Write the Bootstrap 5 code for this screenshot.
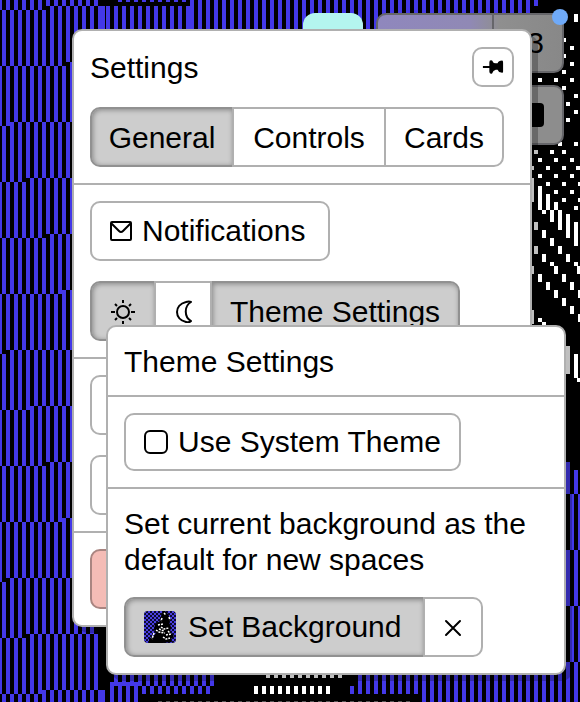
<!DOCTYPE html>
<html lang="en">
<head>
<meta charset="utf-8">
<meta name="viewport" content="width=device-width, initial-scale=1">
<title>Settings</title>
<link href="https://cdn.jsdelivr.net/npm/bootstrap@5.3.0/dist/css/bootstrap.min.css" rel="stylesheet">
<style>
  :root { --line: #b0b0b0; --line-strong: #919191; --pressed: #cdcdcd; }
  body { font-family: "Liberation Sans", Arial, sans-serif; font-size: 30px; line-height: 36px; color: #000; background: #000; }
  .backdrop-art { z-index: 0; }
  .space { min-height: 100vh; }
  .toolbar-top { padding: 13px 16px 0 0; gap: 13px; z-index: 1; }
  .user-pill { width: 60px; height: 60px; border-radius: 12px; background: #b4f5ef; }
  .glass { height: 60px; border: 2px solid #66666a; border-radius: 10px; color: #000; }
  .glass-wide { width: 188px; background: linear-gradient(90deg, #8f87bd 0, #9089b5 50%, #8f8f8f 66%, #888 100%); }
  .glass-wide > span:first-child { flex: 0 0 116px; border-right: 2px solid #66666a; }
  .glass-wide > span:last-child { padding-right: 18px; }
  .glass-small { width: 90px; background: #8d8d8d; padding-right: 18px; margin: 12px 16px 0 auto; }
  .glass-small i { width: 26px; height: 24px; border-radius: 4px; background: #000; }
  .notice-dot { width: 16px; height: 16px; background: #6faaf8; top: 9px; right: 12px; z-index: 2; }
  .panel { background: #fff; border: 2px solid var(--line); border-radius: 10px; box-shadow: 6px 6px 0 rgba(0,0,0,.25); }
  .panel > section { padding: 16px; }
  .panel > section + section { border-top: 2px solid var(--line); }
  .panel-settings { top: 29px; left: 72px; right: 48px; z-index: 3; }
  .panel-theme { top: 325px; left: 106px; right: 14px; z-index: 4; }
  .panel h1, .panel h2, .panel p { font-size: 30px; line-height: 36px; font-weight: 400; }
  .panel h1, .panel h2, .panel p { padding-top: 1px; margin-bottom: -1px; }
  .stack { gap: 20px; }
  .panel .btn {
    --bs-btn-font-size: 30px; --bs-btn-line-height: 36px; --bs-btn-color: #000; --bs-btn-bg: #fff;
    --bs-btn-padding-x: 18px; --bs-btn-padding-y: 10px; --bs-btn-border-width: 2px; --bs-btn-border-color: var(--line);
    --bs-btn-border-radius: 10px; --bs-btn-active-bg: var(--pressed); --bs-btn-active-border-color: var(--line-strong);
    --bs-btn-active-color: #000; --bs-btn-hover-bg: #eee; --bs-btn-hover-color: #000; --bs-btn-hover-border-color: var(--line);
    min-height: 60px; white-space: nowrap;
  }
  .panel .btn-text { padding-top: 11px; padding-bottom: 9px; }
  .panel .btn-group > .btn { flex: 0 0 auto; }
  .panel .btn-group > .btn:not(:first-child) { margin-left: -2px; }
  .panel .btn.active { box-shadow: inset 1px 1px 5px rgba(0,0,0,.35); z-index: 0; }
  .panel .btn-group > .btn:not(.active) { z-index: 1; }
  .panel .tab-general { width: 144px; padding-left: 0; padding-right: 0; }
  .panel .tab-controls { width: 154px; padding-left: 0; padding-right: 0; }
  .panel .btn-notify { min-width: 240px; }
  .panel .btn-set { min-width: 301px; }
  .panel .btn-pin { --bs-btn-padding-x: 8px; --bs-btn-padding-y: 7px; min-height: 40px; width: 42px; }
  .panel .btn-danger-soft { --bs-btn-bg: #f4bcb6; --bs-btn-border-color: #a98581; }
  .panel .btn-check-row { --bs-btn-padding-y: 9px; min-height: 58px; }
  .box-tick { appearance: none; width: 24px; height: 24px; margin: 0; border: 2px solid #000; border-radius: 6px; background: #fff; }
  .box-tick:checked { background: #000; }
  .gap-icon { gap: 10px; }
  .gap-thumb { gap: 12px; }
  svg { display: block; }
  .thumb { border-radius: 4px; }
  .ink { fill: none; stroke: #000; stroke-width: 2; }
</style>
</head>
<body>
<main class="space position-relative overflow-hidden">
  <svg class="backdrop-art position-absolute top-0 start-0" width="580" height="702" viewBox="0 0 580 702" aria-hidden="true">
    <rect width="580" height="702" fill="#000"/>
    <path id="weave" fill="#4338e8"/>
    <path id="sparks" fill="#fff"/>
    <path d="M158 701.500H412" stroke="#555" stroke-dasharray="4 4"/>
  </svg>

  <div class="toolbar-top d-flex justify-content-end position-relative">
    <div class="user-pill"></div>
    <div class="glass glass-wide d-flex">
      <span></span><span class="flex-fill d-flex align-items-center justify-content-end">3</span>
    </div>
  </div>
  <div class="glass glass-small d-flex align-items-center justify-content-end position-relative"><i></i></div>
  <span class="notice-dot position-absolute rounded-circle"></span>

  <div class="panel panel-settings position-absolute" role="dialog" aria-labelledby="settings-title">
    <section class="d-flex flex-column stack">
      <div class="d-flex justify-content-between align-items-center">
        <h1 class="mt-0" id="settings-title">Settings</h1>
        <button type="button" class="btn btn-pin d-flex align-items-center justify-content-center" aria-label="Pin">
          <svg width="24" height="16" viewBox="0 0 24 16"><path d="M1 7H8V3Q8 0 11 1Q12 4 15 4H17Q18 1 22 1Q23 1 23 3V13Q23 15 21 14Q18 14 17 11H15Q12 12 11 15Q8 16 8 13V9H1Z"/></svg>
        </button>
      </div>
      <div class="btn-group align-self-start" role="group" aria-label="Settings sections">
        <button type="button" class="btn btn-text tab-general active" aria-pressed="true">General</button>
        <button type="button" class="btn btn-text tab-controls">Controls</button>
        <button type="button" class="btn btn-text">Cards</button>
      </div>
    </section>
    <section class="d-flex flex-column align-items-start stack">
      <button type="button" class="btn btn-notify d-flex align-items-center gap-icon">
        <svg width="22" height="20" viewBox="0 0 22 20"><rect class="ink" x="1" y="1" width="20" height="18" rx="1"/><path class="ink" d="M1 2L9 10Q11 12 13 10L21 2"/></svg>
        Notifications
      </button>
      <div class="btn-group" role="group" aria-label="Theme">
        <button type="button" class="btn active d-flex align-items-center" aria-label="Light" aria-pressed="true">
          <svg width="26" height="26" viewBox="0 0 26 26"><circle class="ink" cx="13" cy="14" r="6"/><path class="ink" d="M13 2V5M13 23V26M1 14H5M21 14H25M5 6L7 8M19 20L21 22M5 22L7 20M19 8L21 6"/></svg>
        </button>
        <button type="button" class="btn d-flex align-items-center" aria-label="Dark">
          <svg width="18" height="24" viewBox="0 0 18 24"><path class="ink" stroke-linejoin="round" d="M17 3Q15 2 12 3C0 6 0 20 12 23Q15 24 17 22C10 18 10 7 17 3Z"/></svg>
        </button>
        <button type="button" class="btn btn-text active" aria-expanded="true">Theme Settings</button>
      </div>
    </section>
    <section class="d-flex flex-column stack">
      <button type="button" class="btn" aria-label="Option"></button>
      <button type="button" class="btn" aria-label="Option"></button>
    </section>
    <section class="d-flex flex-column">
      <button type="button" class="btn btn-danger-soft" aria-label="Remove"></button>
    </section>
  </div>

  <div class="panel panel-theme position-absolute" role="dialog" aria-labelledby="theme-title">
    <section><h2 class="mt-0" id="theme-title">Theme Settings</h2></section>
    <section class="d-flex">
      <label class="btn btn-check-row d-flex align-items-center gap-icon" for="system-theme">
        <input class="box-tick" type="checkbox" id="system-theme">
        Use System Theme
      </label>
    </section>
    <section class="d-flex flex-column align-items-start stack">
      <p class="mt-0">Set current background as the default for new spaces</p>
      <div class="btn-group" role="group" aria-label="Default background">
        <button type="button" class="btn btn-set active d-flex align-items-center gap-thumb">
          <svg class="thumb" width="32" height="32" viewBox="0 0 32 32" aria-hidden="true">
            <defs><pattern id="mesh" width="4" height="4" patternUnits="userSpaceOnUse"><path d="M0 0h2v2h-2zM2 2h2v2h-2z" fill="#4a40e0"/></pattern></defs>
            <rect width="32" height="32" fill="#0c0a30"/>
            <rect width="32" height="32" fill="url(#mesh)"/>
            <path d="M19 0L17 5L16 10L11 13L10 19L12 22L9 25L5 28L5 32H19L28 31L27 28L30 25L26 21L27 16L25 11L27 9L24 3L21 0Z"/>
            <path fill="none" stroke="#fff" stroke-width="1.500" stroke-dasharray="2 1" d="M20 2L22 4M18 7L17 10M25 6L26 9M14 14L19 13M12 19L15 21L21 22M17 16L20 18L25 17M22 24L27 23M19 26L22 28L26 27M10 22L8 28M15 18L20 20M24 20L26 22"/>
          </svg>
          Set Background
        </button>
        <button type="button" class="btn d-flex align-items-center" aria-label="Clear background">
          <svg width="20" height="20" viewBox="0 0 20 20"><path class="ink" stroke-linecap="round" d="M3 4L17 18M17 4L3 18"/></svg>
        </button>
      </div>
    </section>
  </div>
</main>

<script>
  // Stripes are 4px wide on an 8px pitch; each row is offset by half a pitch.
  const box = (x, y, w, h) => `M${x} ${y}h${w}v${h}h${-w}z`;
  const run = (x0, x1, y0, y1) => { let d = ''; for (let x = x0; x < x1; x += 8) d += box(x, y0, 4, y1 - y0); return d; };
  const breaks = [[-50, 0], [6, 46], [62, 66], [122, 8], [178, 26], [234, 46], [290, 62], [350, 6], [406, 28], [462, 46], [518, 62], [578, 6], [634, 26], [690, 42], [750, 0]];
  let weave = '';
  for (let i = 0; i < breaks.length - 1; i++) {
    for (let x = i % 2 ? 2 : -2; x < 98; x += 8) {
      const top = breaks[i][0] + (x < breaks[i][1] ? 4 : 0);
      const end = breaks[i + 1][0] + (x < breaks[i + 1][1] ? 4 : 0);
      weave += box(x, top, 4, end - top);
    }
  }
  weave += run(106, 190, 6, 40) + box(98, 6, 7, 34) + run(118, 190, 0, 2) + run(190, 530, 0, 40) + box(534, 0, 4, 6);
  weave += run(566, 570, 462, 494) + run(574, 578, 470, 494) + run(570, 580, 494, 550) + run(566, 580, 550, 606) + run(570, 580, 606, 662) + run(566, 580, 662, 702);
  weave += run(114, 214, 670, 686) + run(110, 138, 682, 702) + run(142, 214, 686, 694) + run(358, 422, 670, 694) + box(350, 686, 4, 8) + run(422, 566, 670, 702) + box(98, 690, 7, 12);
  document.getElementById('weave').setAttribute('d', weave);

  const dots = [[564,40],[572,48],[564,56],[572,64],[564,72],[556,80],[572,80],[540,80],[564,88],[576,96],[568,104],[576,112],[568,120],
    [560,144],[576,144],[536,152],[552,152],[564,152],[540,160],[556,160],[572,160],[532,168],[548,168],[564,168],[578,168],[540,176],[556,176],[572,176],
    [548,184],[564,184],[580,184],[556,192],[572,192],[564,200],[580,200],[576,208],[544,212],[552,264],[576,264],[540,320],[544,324],[579,380]];
  const dashes = [[536,226],[544,234],[552,242],[560,250],[568,258],[536,250],[544,258],[556,270],[564,278],[572,286],[580,294],[532,270],
    [540,278],[548,286],[556,294],[564,302],[572,310],[580,318],[579,270]];
  const bars = [[532,178,24],[540,186,24],[548,194,16],[556,202,8],[552,210,12],[560,210,20],[568,214,24],[576,222,24],[532,310,14],[568,346,28],[576,354,24],[576,14,8]];
  let sparks = '';
  for (const [x, y] of dots) sparks += box(x - 2, y - 2, 4, 4);
  for (const [x, y] of dashes) sparks += box(x - 2, y - 4, 4, 8);
  for (const [x, y, h] of bars) sparks += box(x - 2, y, 4, h);
  sparks += run(254, 334, 686, 694) + run(266, 346, 670, 678);
  document.getElementById('sparks').setAttribute('d', sparks);
</script>
<script src="https://cdn.jsdelivr.net/npm/bootstrap@5.3.0/dist/js/bootstrap.bundle.min.js"></script>
</body>
</html>
